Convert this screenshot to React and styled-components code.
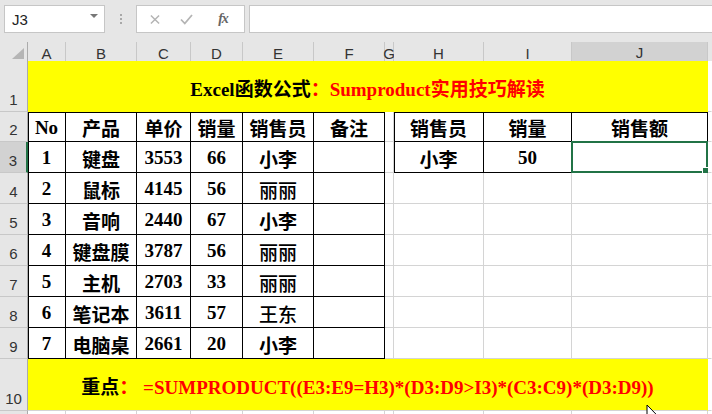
import React from 'react';
import styled, { createGlobalStyle } from 'styled-components';

const COLS = [28, 38, 71, 54, 52, 71, 71, 9, 90, 88, 136, 4];
const TEMPLATE = COLS.map((c) => c + 'px').join(' ');
const GRID = '#d4d4d4';
const GREEN = '#217346';

const Global = createGlobalStyle`
  html, body { margin: 0; padding: 0; background: #e6e6e6; overflow: hidden; }
  body { width: 712px; height: 414px; font-family: "Liberation Sans", Arial, sans-serif; }
`;

const Frame = styled.div`
  width: 712px;
  height: 414px;
  position: relative;
  overflow: hidden;
  display: flex;
  flex-direction: column;
  background: #fff;
`;

const Toolbar = styled.div`
  flex: none;
  height: 42px;
  box-sizing: border-box;
  background: #e6e6e6;
  display: flex;
  align-items: flex-start;
  padding: 5px 0 0 4px;
`;

const NameBox = styled.div`
  box-sizing: border-box;
  width: 101px;
  height: 28px;
  background: #fff;
  border: 1px solid #c6c6c6;
  display: flex;
  align-items: center;
  justify-content: space-between;
  padding: 0 6px 0 7px;
  font-size: 15px;
  color: #222;
`;

const DropTri = styled.span`
  width: 0;
  height: 0;
  border-left: 4px solid transparent;
  border-right: 4px solid transparent;
  border-top: 4px solid #777;
  margin-bottom: 6px;
`;

const Dots = styled.div`
  width: 31px;
  height: 28px;
  display: flex;
  flex-direction: column;
  align-items: center;
  justify-content: center;
  gap: 2px;
  padding-left: 1px;
  box-sizing: border-box;
`;

const Dot = styled.span`
  width: 2px;
  height: 2px;
  background: #a8a8a8;
`;

const FxBox = styled.div`
  box-sizing: border-box;
  width: 109px;
  height: 28px;
  background: #fff;
  border: 1px solid #c6c6c6;
  display: flex;
  align-items: center;
  padding-left: 13px;
`;

const FxBtn = styled.span`
  width: ${(p) => p.$w}px;
  display: flex;
  align-items: center;
  justify-content: center;
`;

const FxText = styled.span`
  font-family: "Liberation Serif", serif;
  font-style: italic;
  font-weight: 700;
  font-size: 14px;
  color: #666;
  letter-spacing: -1px;
`;

const FormulaInput = styled.div`
  box-sizing: border-box;
  flex: 1;
  height: 28px;
  margin-left: 4px;
  margin-right: -4px;
  background: #fff;
  border: 1px solid #c6c6c6;
`;

const GridRow = styled.div`
  flex: none;
  display: grid;
  grid-template-columns: ${TEMPLATE};
  height: ${(p) => p.$h}px;
`;

const HeadCell = styled.div`
  box-sizing: border-box;
  background: ${(p) => (p.$sel ? '#d2d2d2' : '#e6e6e6')};
  border-right: 1px solid ${(p) => (p.$last ? 'transparent' : '#c8c8c8')};
  border-bottom: ${(p) => (p.$sel ? `2px solid ${GREEN}` : '1px solid #ababab')};
  display: flex;
  align-items: center;
  justify-content: center;
  font-size: 15px;
  color: #333;
  padding-top: 2px;
`;

const Corner = styled.div`
  box-sizing: border-box;
  background: #e6e6e6;
  border-right: 1px solid #ababab;
  border-bottom: 1px solid #ababab;
  display: flex;
  align-items: flex-end;
  justify-content: flex-end;
  padding: 0 3px 3px 0;
`;

const RowHead = styled.div`
  box-sizing: border-box;
  background: ${(p) => (p.$sel ? '#d2d2d2' : '#e6e6e6')};
  border-right: ${(p) => (p.$sel ? `2px solid ${GREEN}` : '1px solid #ababab')};
  border-bottom: 1px solid #c8c8c8;
  display: flex;
  align-items: flex-end;
  justify-content: center;
  padding-bottom: 3px;
  font-size: 15px;
  color: #333;
`;

const Cell = styled.div`
  box-sizing: border-box;
  grid-column: span ${(p) => p.$span || 1};
  position: relative;
  display: flex;
  align-items: center;
  justify-content: center;
  padding-top: 2px;
  background: ${(p) => p.$bg || '#fff'};
  border-right: 1px solid ${(p) => p.$br || GRID};
  border-bottom: 1px solid ${(p) => p.$bb || GRID};
  box-shadow: ${(p) =>
    [p.$lt ? 'inset 1px 0 0 #000' : null, p.$tp ? 'inset 0 1px 0 #000' : null]
      .filter(Boolean)
      .join(', ') || 'none'};
  font-family: "Liberation Serif", "Noto Sans CJK SC", serif;
  font-weight: ${(p) => (p.$light ? 500 : 700)};
  font-size: ${(p) => p.$fs || 19}px;
  color: #000;
  white-space: nowrap;
`;

const Red = styled.span`
  color: #ff0000;
`;

const Selection = styled.div`
  position: absolute;
  left: -1px;
  top: -1px;
  right: -1px;
  bottom: -1px;
  border: 2px solid ${GREEN};
  pointer-events: none;
`;

const Handle = styled.span`
  position: absolute;
  right: -4px;
  bottom: -4px;
  width: 6px;
  height: 6px;
  background: ${GREEN};
  border: 1px solid #fff;
`;

const Cursor = styled.svg`
  position: absolute;
  left: 646px;
  top: 404px;
`;

const LETTERS = ['A', 'B', 'C', 'D', 'E', 'F', 'G', 'H', 'I', 'J'];

const TABLE = [
  ['No', '产品', '单价', '销量', '销售员', '备注'],
  ['1', '键盘', '3553', '66', '小李', ''],
  ['2', '鼠标', '4145', '56', '丽丽', ''],
  ['3', '音响', '2440', '67', '小李', ''],
  ['4', '键盘膜', '3787', '56', '丽丽', ''],
  ['5', '主机', '2703', '33', '丽丽', ''],
  ['6', '笔记本', '3611', '57', '王东', ''],
  ['7', '电脑桌', '2661', '20', '小李', ''],
];

const LOOKUP = [
  ['销售员', '销量', '销售额'],
  ['小李', '50', ''],
];

const LIGHT = new Set(['丽丽', '王东']);

function DataRow({ index }) {
  const rowNum = index + 2;
  const t = TABLE[index];
  const l = LOOKUP[index];
  const isTop = index === 0;
  return (
    <GridRow $h={index === 0 ? 30 : 31}>
      <RowHead $sel={rowNum === 3}>{rowNum}</RowHead>
      {t.map((v, i) => (
        <Cell key={i} $br="#000" $bb="#000" $lt={i === 0} $tp={isTop} $light={LIGHT.has(v)}>
          {v}
        </Cell>
      ))}
      <Cell />
      {[0, 1, 2].map((i) =>
        l ? (
          <Cell key={'l' + i} $br="#000" $bb="#000" $lt={i === 0} $tp={isTop}>
            {l[i]}
            {index === 1 && i === 2 && (
              <Selection>
                <Handle />
              </Selection>
            )}
          </Cell>
        ) : (
          <Cell key={'l' + i} />
        )
      )}
      <Cell $br="transparent" />
    </GridRow>
  );
}

export default function App() {
  return (
    <Frame>
      <Global />
      <Toolbar>
        <NameBox>
          J3
          <DropTri />
        </NameBox>
        <Dots>
          <Dot />
          <Dot />
          <Dot />
        </Dots>
        <FxBox>
          <FxBtn $w={10}>
            <svg width="11" height="11" viewBox="0 0 11 11">
              <path d="M1 1 L10 10 M10 1 L1 10" stroke="#b4b4b4" strokeWidth="1.6" fill="none" />
            </svg>
          </FxBtn>
          <FxBtn $w={52}>
            <svg width="13" height="11" viewBox="0 0 13 11">
              <path d="M1 5.5 L4.8 9.5 L12 1" stroke="#b4b4b4" strokeWidth="1.8" fill="none" />
            </svg>
          </FxBtn>
          <FxBtn $w={22}>
            <FxText>fx</FxText>
          </FxBtn>
        </FxBox>
        <FormulaInput />
      </Toolbar>

      <GridRow $h={19}>
        <Corner>
          <svg width="12" height="11" viewBox="0 0 12 11">
            <polygon points="12,0 12,11 0,11" fill="#b5b5b5" />
          </svg>
        </Corner>
        {LETTERS.map((c) => (
          <HeadCell key={c} $sel={c === 'J'}>
            {c}
          </HeadCell>
        ))}
        <HeadCell $last />
      </GridRow>

      <GridRow $h={51}>
        <RowHead>1</RowHead>
        <Cell $span={10} $bg="#ffff00" $br="#ffff00" $bb="#ffff00" $fs={19}>
          Excel函数公式<Red>：Sumproduct实用技巧解读</Red>
        </Cell>
        <Cell $br="transparent" />
      </GridRow>

      {TABLE.map((_, i) => (
        <DataRow key={i} index={i} />
      ))}

      <GridRow $h={52}>
        <RowHead>10</RowHead>
        <Cell $span={10} $bg="#ffff00" $br="#ffff00" $fs={19}>
          重点<Red>：&nbsp;=SUMPRODUCT((E3:E9=H3)*(D3:D9&gt;I3)*(C3:C9)*(D3:D9))</Red>
        </Cell>
        <Cell $br="transparent" />
      </GridRow>

      <GridRow $h={10}>
        <RowHead />
        {LETTERS.map((c) => (
          <Cell key={c} />
        ))}
        <Cell $br="transparent" />
      </GridRow>

      <Cursor width="13" height="20" viewBox="0 0 13 20">
        <path d="M1 1 L1 16 L4.6 12.6 L7.2 18.6 L9.4 17.6 L6.9 11.8 L11.6 11.8 Z" fill="#fff" stroke="#000" strokeWidth="1" />
      </Cursor>
    </Frame>
  );
}
